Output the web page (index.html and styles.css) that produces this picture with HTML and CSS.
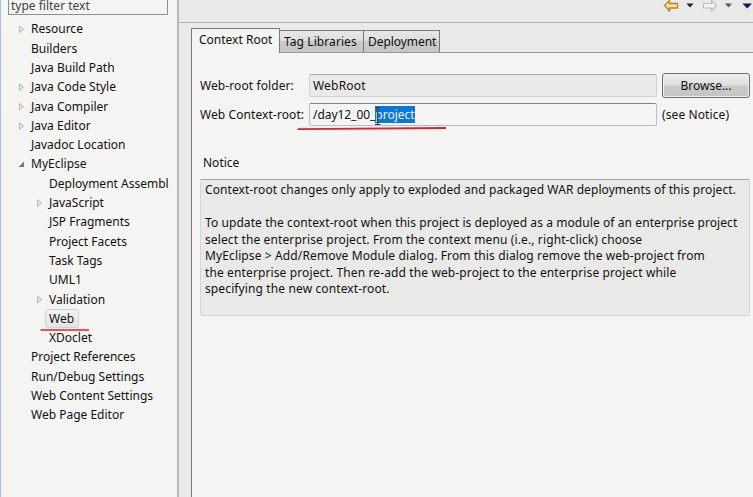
FILE: index.html
```html
<!DOCTYPE html>
<html lang="en">
<head>
<meta charset="utf-8">
<title>Project Properties</title>
<link rel="stylesheet" href="styles.css">
</head>
<body>
<div class="window">
  <aside class="sidebar">
    <div class="filter">type filter text</div>
    <ul class="tree">
      <li class="closed"><span>Resource</span></li>
      <li><span>Builders</span></li>
      <li><span>Java Build Path</span></li>
      <li class="closed"><span>Java Code Style</span></li>
      <li class="closed"><span>Java Compiler</span></li>
      <li class="closed"><span>Java Editor</span></li>
      <li><span>Javadoc Location</span></li>
      <li class="open"><span>MyEclipse</span></li>
      <li class="child"><span>Deployment Assembl</span></li>
      <li class="child closed"><span>JavaScript</span></li>
      <li class="child"><span>JSP Fragments</span></li>
      <li class="child"><span>Project Facets</span></li>
      <li class="child"><span>Task Tags</span></li>
      <li class="child"><span>UML1</span></li>
      <li class="child closed"><span>Validation</span></li>
      <li class="child selected"><span>Web</span></li>
      <li class="child"><span>XDoclet</span></li>
      <li><span>Project References</span></li>
      <li><span>Run/Debug Settings</span></li>
      <li><span>Web Content Settings</span></li>
      <li><span>Web Page Editor</span></li>
    </ul>
  </aside>
  <main class="content">
    <header class="toolbar">
      <svg width="93" height="12" viewBox="0 0 93 12">
        <path d="M4.500 5.500 9.500 .5V3.500H17.500V8H9.500V11Z" fill="#f9e3a0" stroke="#b5822b" stroke-width="1.300"/>
        <path d="M26.500 3.500H33.500L30 7.500Z" fill="#222"/>
        <path d="M56.500 5.500 51.500 .5V3.500H43.500V8H51.500V11Z" fill="#f1f1ef" stroke="#bcbcba" stroke-width="1.200"/>
        <path d="M65 3.500H72L68.500 7.500Z" fill="#555"/>
        <path d="M82.500 3.500H92L87.200 8.500Z" fill="#1c1644"/>
      </svg>
    </header>
    <div class="page">
      <nav class="tabs">
        <div class="tab active"><span>Context Root</span></div>
        <div class="tab libraries"><span>Tag Libraries</span></div>
        <div class="tab deployment"><span>Deployment</span></div>
      </nav>
      <section class="panel">
        <div class="form">
          <label class="label">Web-root folder:</label>
          <div class="field readonly">WebRoot</div>
          <div class="button"><span>Browse...</span></div>
          <label class="label">Web Context-root:</label>
          <div class="field editable"><span class="prefix">/day12_00_</span><mark>project</mark></div>
          <div class="hint">(see Notice)</div>
        </div>
        <h2>Notice</h2>
        <div class="notice">
          <p>Context-root changes only apply to exploded and packaged WAR deployments of this project.</p>
          <p>To update the context-root when this project is deployed as a module of an enterprise project<br><span class="wide">select the enterprise project. From the context menu (i.e., right-click) choose<br>MyEclipse &gt; Add/Remove Module dialog. From this dialog remove the web-project from<br>the enterprise project. Then re-add the web-project to the enterprise project while<br>specifying the new context-root.</span></p>
        </div>
      </section>
    </div>
  </main>
</div>
<svg class="marks" width="753" height="497" viewBox="0 0 753 497">
  <path d="M40.500 330H89" stroke="#ec1c24" stroke-width="1.700"/>
  <path d="M297.500 129.200 446 128" stroke="#ec1c24" stroke-width="1.800"/>
  <path d="M375.500 107.500H380M377.700 107.500V124M375 124.500H380.500" fill="none" stroke="#4a3a35" stroke-width="1.200"/>
</svg>
</body>
</html>
```
FILE: styles.css
```css
* { box-sizing: border-box; }
body { margin: 0; width: 753px; height: 497px; overflow: hidden; background: #e9e9e7; font: 12px/16px "Noto Sans", sans-serif; color: #111; }
.window { display: flex; height: 497px; }
.sidebar { width: 179px; flex: none; overflow: hidden; background: #f4f4f2; border-left: 1px solid #a9bdd6; border-right: 2px solid #b9b9b9; padding-left: 7px; }
.filter { width: 160px; height: 15px; border: 1px solid #8e8f96; border-top: 0; padding-left: 2px; line-height: 12px; color: #444; }
.tree { list-style: none; margin: 4.400px 0 0; padding: 0; width: 162px; }
.tree li { height: 19.300px; padding-left: 23px; line-height: 19.300px; white-space: nowrap; position: relative; }
.tree .child { padding-left: 41px; }
.closed::before { content: ""; position: absolute; left: 11px; top: 6px; width: 5px; height: 8px; background: #b4b4b4; clip-path: polygon(0 0, 100% 50%, 0 100%, 0 0, 1px 2px, 1px 6px, 3.500px 4px, 1px 2px); }
.child.closed::before { left: 29px; }
.open::before { content: ""; position: absolute; left: 10px; top: 7px; width: 6px; height: 6px; background: #777; clip-path: polygon(100% 0, 100% 100%, 0 100%); }
.tree .selected { padding-left: 37px; }
.selected span { display: block; width: 34px; height: 19px; line-height: 17px; padding-left: 3px; border: 1px solid #d2d2d2; border-radius: 3px; background: linear-gradient(#f3f3f3, #e4e4e4); }
.content { flex: 1; min-width: 0; display: flex; flex-direction: column; }
.toolbar { height: 23px; flex: none; border-bottom: 1px solid #b0b0b0; display: flex; justify-content: flex-end; }
.page { flex: 1; display: flex; flex-direction: column; padding: 5px 0 0 12px; }
.tabs { height: 25px; display: flex; align-items: flex-end; border-bottom: 1px solid #989898; }
.tab { height: 22px; border: 1px solid #77777c; border-bottom: 0; border-left: 0; background: linear-gradient(#e7e7e6 0, #dededd 45%, #c9c9c8 50%, #c6c6c5); line-height: 22px; white-space: nowrap; padding-left: 4px; letter-spacing: .08px; }
.tab.active { height: 25px; width: 89px; margin-bottom: -1px; border-left: 1px solid #77777c; background: #f4f4f2; padding-left: 7px; line-height: 21px; letter-spacing: 0; }
.libraries { width: 84px; }
.tab.deployment { width: 76px; letter-spacing: -.05px; }
.panel { flex: 1; border-left: 1px solid #77777c; background: #f4f4f2; padding: 21px 3px 0 8px; }
.form { display: grid; grid-template-columns: 109px 348px 93px; row-gap: 6px; grid-auto-rows: 23px; line-height: 23px; white-space: nowrap; }
.label { letter-spacing: .09px; }
.field { border: 1px solid #cfd1d2; border-top-color: #a5a7a9; border-radius: 2px; padding-left: 3px; line-height: 21px; }
.readonly { background: #e9e9e7; letter-spacing: .2px; }
.editable { border-color: #a9c3d4; border-top-color: #7d8286; }
.editable span, mark { display: inline-block; }
.prefix { letter-spacing: -.05px; }
mark { background: #0b78d8; color: #eaf4ff; height: 17px; line-height: 17px; }
.button { margin: -1px 0 0 5px; width: 88px; height: 25px; border: 1px solid #707070; border-radius: 3px; box-shadow: inset 0 0 0 1px #eee; background: linear-gradient(#eeeeed, #dededd 48%, #cacac9 52%, #c4c4c3); text-align: center; line-height: 23px; }
.hint { padding-left: 5px; letter-spacing: .1px; }
h2 { margin: 27px 0 0 3px; font: inherit; line-height: 20px; }
.notice { height: 137px; margin-top: 6px; width: 550px; border: 1px solid #d2d6d8; border-top-color: #a2a4a6; background: #e9e9e7; padding: 2px 4px; line-height: 16.500px; letter-spacing: .08px; white-space: nowrap; border-radius: 2px; }
.notice p { margin: 0 0 16.500px; }
.wide { letter-spacing: .12px; }
.marks { position: absolute; left: 0; top: 0; }
```
